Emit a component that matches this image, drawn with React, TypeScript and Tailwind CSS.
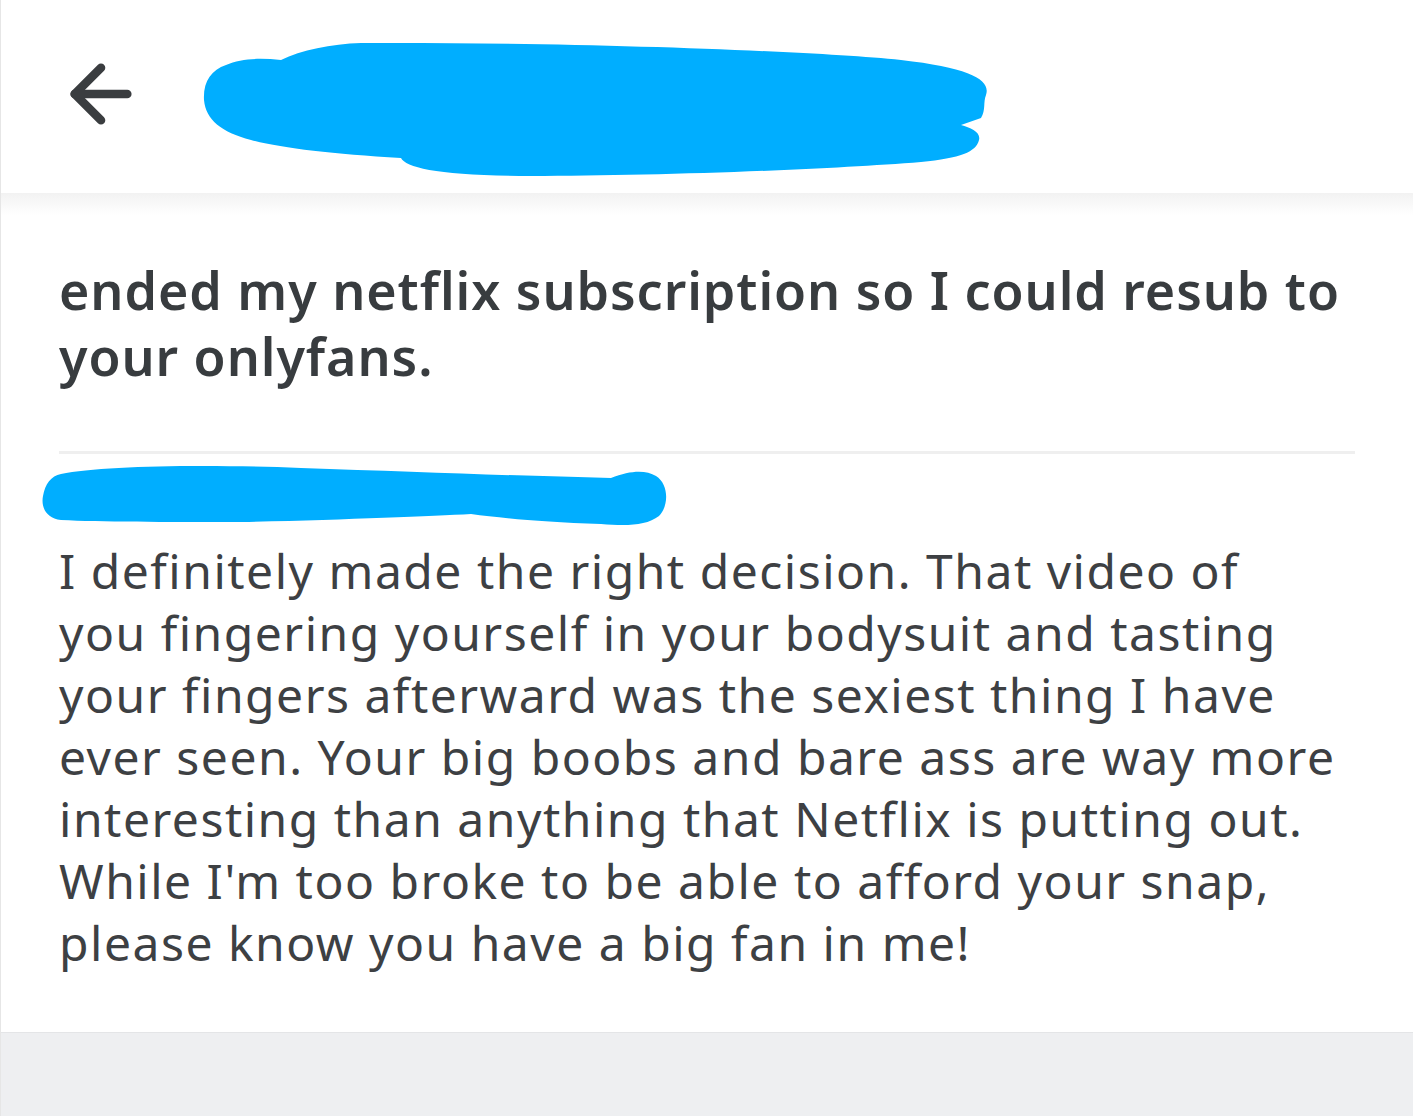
import { ArrowLeft } from "lucide-react";

const lines = [
  "I definitely made the right decision. That video of",
  "you fingering yourself in your bodysuit and tasting",
  "your fingers afterward was the sexiest thing I have",
  "ever seen. Your big boobs and bare ass are way more",
  "interesting than anything that Netflix is putting out.",
  "While I'm too broke to be able to afford your snap,",
  "please know you have a big fan in me!",
];

function HeaderScribble() {
  return (
    <svg width="790" height="140" viewBox="0 0 790 140" className="block">
      <path
        d="M25 25 C40 18 60 18 80 20 C100 10 130 4 160 3 C350 2 600 10 700 20 C770 28 790 40 785 55 C782 62 785 70 780 78 L760 85 C770 88 780 92 778 100 C775 112 760 118 720 122 C620 130 450 136 330 136 C240 136 205 128 200 118 C130 114 80 108 50 100 C20 92 5 80 3 60 C2 42 10 30 25 25 Z"
        fill="#00aeff"
      />
    </svg>
  );
}

function NameScribble() {
  return (
    <svg width="630" height="64" viewBox="0 0 630 64" className="block">
      <path
        d="M20 10 C60 2 160 0 260 4 C380 8 480 12 570 14 C590 6 605 6 615 12 C628 20 628 42 618 52 C605 62 585 62 560 60 C500 58 460 54 430 50 C390 52 300 56 200 58 C120 58 60 58 20 56 C4 54 0 42 2 32 C4 20 10 12 20 10 Z"
        fill="#00aeff"
      />
    </svg>
  );
}

export default function App() {
  return (
    <div
      className="w-[1413px] h-[1116px] bg-white flex flex-col overflow-hidden border-l border-[#e6e6e6]"
      style={{ fontFamily: '"Noto Sans", "Open Sans", sans-serif' }}
    >
      <header className="h-[193px] flex items-start shrink-0">
        <div className="w-[200px] pl-[55px] pt-[49px]">
          <ArrowLeft size={90} strokeWidth={2.3} color="#3a3d40" />
        </div>
        <div className="pt-[40px]">
          <HeaderScribble />
        </div>
      </header>
      <div className="h-[22px] bg-gradient-to-b from-[#f2f2f2] to-white shrink-0" />
      <main className="flex-1 px-[58px] pt-[42px]">
        <h1 className="text-[52px] leading-[66px] font-semibold text-[#383c3f] tracking-[0.95px]">
          <span className="block whitespace-nowrap">ended my netflix subscription so I could resub to</span>
          <span className="block whitespace-nowrap">your onlyfans.</span>
        </h1>
        <div className="h-[3px] bg-[#efefef] mt-[62px]" />
        <div className="-ml-[18px] mt-[10px]">
          <NameScribble />
        </div>
        <div className="mt-[12px] text-[48px] leading-[62px] text-[#3d4043] tracking-[1.5px]">
          {lines.map((l, i) => (
            <p key={i} className="whitespace-nowrap">
              {l}
            </p>
          ))}
        </div>
      </main>
      <footer className="h-[84px] bg-[#eeeff1] border-t border-[#e4e5e7] shrink-0" />
    </div>
  );
}
